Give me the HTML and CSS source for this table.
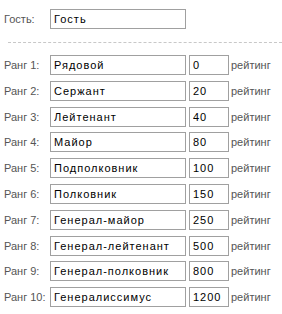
FILE: index.html
```html
<!DOCTYPE html>
<html lang="ru">
<head>
  <meta charset="UTF-8" />
  <title>Ранги</title>
  <link rel="stylesheet" href="styles.css">
</head>
<body>
  <div class="ranks">
    <!-- гость -->
    <div class="row guest-row">
      <label class="row-label">Гость:</label>
      <input class="field field-name" type="text" value="Гость">
    </div>

    <div class="divider"></div>

    <!-- список рангов -->
    <div class="rank-list">
      <div class="row">
        <label class="row-label">Ранг 1:</label>
        <input class="field field-name" type="text" value="Рядовой">
        <input class="field field-points" type="text" value="0">
        <span class="unit">рейтинг</span>
      </div>
      <div class="row">
        <label class="row-label">Ранг 2:</label>
        <input class="field field-name" type="text" value="Сержант">
        <input class="field field-points" type="text" value="20">
        <span class="unit">рейтинг</span>
      </div>
      <div class="row">
        <label class="row-label">Ранг 3:</label>
        <input class="field field-name" type="text" value="Лейтенант">
        <input class="field field-points" type="text" value="40">
        <span class="unit">рейтинг</span>
      </div>
      <div class="row">
        <label class="row-label">Ранг 4:</label>
        <input class="field field-name" type="text" value="Майор">
        <input class="field field-points" type="text" value="80">
        <span class="unit">рейтинг</span>
      </div>
      <div class="row">
        <label class="row-label">Ранг 5:</label>
        <input class="field field-name" type="text" value="Подполковник">
        <input class="field field-points" type="text" value="100">
        <span class="unit">рейтинг</span>
      </div>
      <div class="row">
        <label class="row-label">Ранг 6:</label>
        <input class="field field-name" type="text" value="Полковник">
        <input class="field field-points" type="text" value="150">
        <span class="unit">рейтинг</span>
      </div>
      <div class="row">
        <label class="row-label">Ранг 7:</label>
        <input class="field field-name" type="text" value="Генерал-майор">
        <input class="field field-points" type="text" value="250">
        <span class="unit">рейтинг</span>
      </div>
      <div class="row">
        <label class="row-label">Ранг 8:</label>
        <input class="field field-name" type="text" value="Генерал-лейтенант">
        <input class="field field-points" type="text" value="500">
        <span class="unit">рейтинг</span>
      </div>
      <div class="row">
        <label class="row-label">Ранг 9:</label>
        <input class="field field-name" type="text" value="Генерал-полковник">
        <input class="field field-points" type="text" value="800">
        <span class="unit">рейтинг</span>
      </div>
      <div class="row">
        <label class="row-label">Ранг 10:</label>
        <input class="field field-name" type="text" value="Генералиссимус">
        <input class="field field-points" type="text" value="1200">
        <span class="unit">рейтинг</span>
      </div>
    </div>
  </div>
</body>
</html>
```

FILE: styles.css
```css
* {
  margin: 0;
  padding: 0;
  box-sizing: border-box;
}
body {
  background-color: #fff;
  font-family: 'Liberation Sans', Arial, sans-serif;
  font-size: 11px;
  color: #555;
}
.ranks {
  padding: 9px 0 0 4px;
}
.row {
  display: flex;
  align-items: center;
  height: 20px;
}
.row-label {
  width: 46px;
  flex-shrink: 0;
  color: #555;
}
.field {
  height: 20px;
  border: 1px solid #a0a0a0;
  padding: 0 3px;
  font-family: 'Liberation Sans', Arial, sans-serif;
  font-size: 11px;
  letter-spacing: 1px;
  color: #000;
  background-color: #fff;
  outline: none;
}
.field-name {
  width: 136px;
}
.field-points {
  width: 40px;
  margin-left: 3px;
}
.unit {
  margin-left: 2px;
  color: #555;
}
/* пунктирный разделитель */
.divider {
  margin: 13px 0 12px 4px;
  border-top: 1px dashed #c8c8c8;
}
.rank-list {
  display: flex;
  flex-direction: column;
  gap: 5.8px;
}
```
